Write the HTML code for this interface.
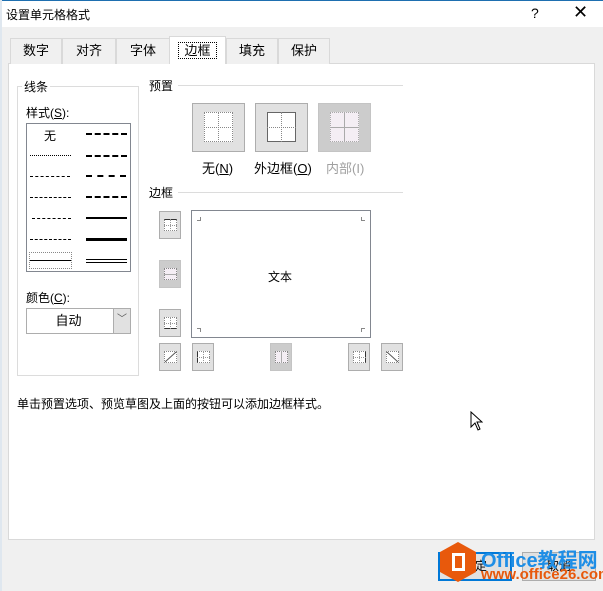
<!DOCTYPE html><html><head><meta charset="utf-8"><style>
*{margin:0;padding:0;box-sizing:border-box}
body{width:603px;height:591px;background:#f0f0f0;font-family:"Liberation Sans","Noto Sans CJK SC",sans-serif;font-size:12px;color:#000;position:relative;overflow:hidden}
.a{position:absolute}
.tab{position:absolute;top:38px;height:26px;border:1px solid #d9d9d9;border-bottom:none;background:#f0f0f0;text-align:center;line-height:24px;font-size:13px}
.btn{position:absolute;background:#e1e1e1;border:1px solid #adadad}
.pb{position:absolute;width:53px;height:49px;background:#e1e1e1;border:1px solid #adadad}
.pb .g{position:absolute;left:11px;top:8px;width:29px;height:30px;background:#fff}
.sb{position:absolute;width:22px;height:28px;background:#e1e1e1;border:1px solid #adadad}
.sb i{position:absolute;left:4px;top:7px;width:13px;height:12px;border:1px dotted #888;background:#fff}
.sb b{position:absolute;left:10px;top:7px;height:12px;border-left:1px dotted #999}
.sb em{position:absolute;left:4px;top:13px;width:13px;border-top:1px dotted #999}
.ln{position:absolute;height:0}
</style></head><body>
<div class="a" style="left:0;top:0;width:603px;height:27px;background:#fff;border-top:1px solid #1e6fb0"></div>
<div class="a" style="left:6px;top:6px;font-size:12px">设置单元格格式</div>
<div class="a" style="left:531px;top:5px;font-size:14px">?</div>
<div class="a" style="left:573px;top:2px;font-size:18px">✕</div>
<div class="a" style="left:0;top:0;width:2px;height:591px;background:#dfe7ef"></div>
<div class="a" style="left:8px;top:63px;width:587px;height:477px;background:#fff;border:1px solid #d9d9d9"></div>
<div class="tab" style="left:10px;width:52px">数字</div>
<div class="tab" style="left:62px;width:54px">对齐</div>
<div class="tab" style="left:116px;width:54px">字体</div>
<div class="tab" style="left:169px;top:36px;height:28px;width:57px;background:#fff;line-height:27px"><span style="border:1px dotted #000;padding:0 5px">边框</span></div>
<div class="tab" style="left:226px;width:52px">填充</div>
<div class="tab" style="left:278px;width:52px">保护</div>
<div class="a" style="left:17px;top:86px;width:122px;height:290px;border:1px solid #dcdcdc"></div>
<div class="a" style="left:22px;top:78px;background:#fff;padding:0 2px">线条</div>
<div class="a" style="left:26px;top:104px">样式(<u>S</u>):</div>
<div class="a" style="left:26px;top:123px;width:105px;height:149px;border:1px solid #828790;background:#fff"></div>
<div class="a" style="left:44px;top:127px">无</div>
<div class="ln" style="left:86px;top:133px;width:41px;border-top:2px dashed #000"></div>
<div class="ln" style="left:30px;top:155px;width:41px;border-top:1px dotted #000"></div>
<div class="ln" style="left:86px;top:155px;width:41px;border-top:2px dashed #000"></div>
<div class="ln" style="left:30px;top:176px;width:40px;border-top:1px dashed #000"></div>
<div class="ln" style="left:86px;top:175px;width:40px;border-top:2px dashed #000"></div>
<div class="ln" style="left:30px;top:197px;width:41px;border-top:1px dashed #000"></div>
<div class="ln" style="left:86px;top:196px;width:41px;border-top:2px dashed #000"></div>
<div class="ln" style="left:32px;top:218px;width:39px;border-top:1px dashed #000"></div>
<div class="ln" style="left:86px;top:217px;width:41px;border-top:2px solid #000"></div>
<div class="ln" style="left:30px;top:239px;width:41px;border-top:1px dashed #000"></div>
<div class="ln" style="left:86px;top:238px;width:41px;border-top:3px solid #000"></div>
<div class="a" style="left:29px;top:252px;width:43px;height:17px;border:1px dotted #888"></div>
<div class="ln" style="left:30px;top:260px;width:41px;border-top:1px solid #000"></div>
<div class="a" style="left:86px;top:259px;width:41px;height:4px;border-top:1px solid #000;border-bottom:1px solid #000"></div>
<div class="a" style="left:26px;top:289px">颜色(<u>C</u>):</div>
<div class="a" style="left:26px;top:308px;width:105px;height:26px;border:1px solid #adadad;background:#fff;text-align:center;line-height:24px;padding-right:20px;font-size:13px">自动</div>
<div class="a" style="left:113px;top:309px;width:17px;height:24px;background:#e1e1e1;border-left:1px solid #adadad;text-align:center;line-height:22px;font-size:10px;color:#555">﹀</div>
<div class="a" style="left:149px;top:77px">预置</div>
<div class="ln" style="left:178px;top:85px;width:225px;border-top:1px solid #dcdcdc"></div>
<div class="pb" style="left:192px;top:103px"><div class="g" style="border:1px dotted #888"></div><div class="a" style="left:25px;top:8px;height:30px;border-left:1px dotted #888"></div><div class="a" style="left:11px;top:23px;width:29px;border-top:1px dotted #888"></div></div>
<div class="pb" style="left:255px;top:103px"><div class="g" style="border:1px solid #666"></div><div class="a" style="left:25px;top:8px;height:30px;border-left:1px dotted #888"></div><div class="a" style="left:11px;top:23px;width:29px;border-top:1px dotted #888"></div></div>
<div class="pb" style="left:318px;top:103px;background:#cccccc;border-color:#c4c4c4"><div class="g" style="border:1px dotted #aaa;background:#f4eef4"></div><div class="a" style="left:25px;top:8px;height:30px;border-left:1px solid #aaa"></div><div class="a" style="left:11px;top:23px;width:29px;border-top:1px solid #aaa"></div></div>
<div class="a" style="left:202px;top:158px;font-size:13px">无(<u>N</u>)</div>
<div class="a" style="left:254px;top:158px;font-size:13px">外边框(<u>O</u>)</div>
<div class="a" style="left:326px;top:158px;font-size:13px;color:#a0a0a0">内部(I)</div>
<div class="a" style="left:149px;top:184px">边框</div>
<div class="ln" style="left:178px;top:192px;width:225px;border-top:1px solid #dcdcdc"></div>
<div class="a" style="left:191px;top:210px;width:180px;height:128px;border:1px solid #828790;background:#fff"></div>
<div class="a" style="left:268px;top:268px;font-size:12px">文本</div>
<div class="a" style="left:197px;top:217px;width:4px;height:4px;border-right:1px solid #888;border-bottom:1px solid #888"></div>
<div class="a" style="left:361px;top:217px;width:4px;height:4px;border-left:1px solid #888;border-bottom:1px solid #888"></div>
<div class="a" style="left:197px;top:328px;width:4px;height:4px;border-right:1px solid #888;border-top:1px solid #888"></div>
<div class="a" style="left:361px;top:328px;width:4px;height:4px;border-left:1px solid #888;border-top:1px solid #888"></div>
<div class="sb" style="left:159px;top:211px"><i style="border-top:1px solid #333"></i><b></b><em></em></div>
<div class="sb" style="left:159px;top:260px;background:#ccc;border-color:#c4c4c4"><i style="background:#f4eef4"></i><em style="border-top:1px solid #aaa"></em></div>
<div class="sb" style="left:159px;top:309px"><i style="border-bottom:1px solid #333"></i><b></b><em></em></div>
<div class="sb" style="left:159px;top:343px"><i></i><svg class="a" style="left:4px;top:7px" width="13" height="12"><line x1="1" y1="11" x2="12" y2="1" stroke="#555"/></svg></div>
<div class="sb" style="left:192px;top:343px"><i style="border-left:1px solid #333"></i><b></b><em></em></div>
<div class="sb" style="left:270px;top:343px;background:#ccc;border-color:#c4c4c4"><i style="background:#f4eef4"></i><b style="border-left:1px solid #aaa"></b></div>
<div class="sb" style="left:348px;top:343px"><i style="border-right:1px solid #333"></i><b></b><em></em></div>
<div class="sb" style="left:381px;top:343px"><i></i><svg class="a" style="left:4px;top:7px" width="13" height="12"><line x1="1" y1="1" x2="12" y2="11" stroke="#555"/></svg></div>
<div class="a" style="left:17px;top:395px">单击预置选项、预览草图及上面的按钮可以添加边框样式。</div>
<svg class="a" style="left:470px;top:411px" width="13" height="20"><path d="M1 1 L1 16 L5 12 L8 19 L10 18 L7 11 L12 11 Z" fill="#fff" stroke="#000"/></svg>
<div class="btn" style="left:438px;top:552px;width:74px;height:29px;border:2px solid #0078d7;text-align:center;line-height:25px">确定</div>
<div class="btn" style="left:522px;top:552px;width:74px;height:29px;text-align:center;line-height:27px">取消</div>
<div class="a" style="left:440px;top:542px;width:36px;height:40px;background:#e8590c;clip-path:polygon(50% 0,100% 25%,100% 75%,50% 100%,0 75%,0 25%)"></div>
<div class="a" style="left:452px;top:553px;width:13px;height:18px;border:3px solid #fff"></div>
<div class="a" style="left:481px;top:544px;font-size:20px;font-weight:bold;color:#1e8ee6">Office教程网</div>
<div class="a" style="left:481px;top:566px;font-size:15px;font-weight:bold;color:#e8590c">www.office26.com</div>
</body></html>
